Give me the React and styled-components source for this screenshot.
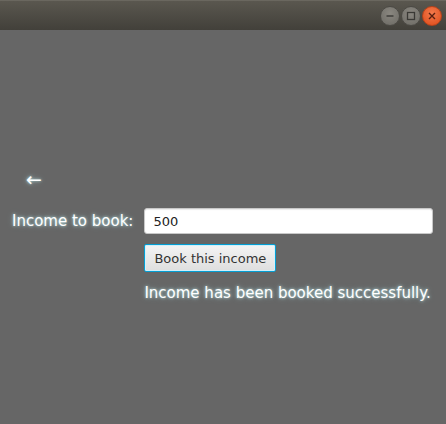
import React from "react";
import styled, { createGlobalStyle } from "styled-components";

const GlobalStyle = createGlobalStyle`
  html, body {
    margin: 0;
    padding: 0;
    background: #666666;
  }
  body {
    font-family: "DejaVu Sans", "Liberation Sans", sans-serif;
  }
`;

const glow = "0 0 3px rgba(200, 255, 255, 0.8), 0 0 6px rgba(180, 240, 255, 0.4)";

export default function App() {
  const [amount, setAmount] = React.useState("500");

  return (
    <Window>
      <GlobalStyle />
      <TitleBar>
        <WinButton>
          <svg width="10" height="10" viewBox="0 0 10 10">
            <line x1="1.5" y1="5" x2="8.5" y2="5" stroke="#3a3935" strokeWidth="1.4" />
          </svg>
        </WinButton>
        <WinButton>
          <svg width="10" height="10" viewBox="0 0 10 10">
            <rect x="1.5" y="1.5" width="7" height="7" fill="none" stroke="#3a3935" strokeWidth="1.3" />
          </svg>
        </WinButton>
        <WinButton close>
          <svg width="10" height="10" viewBox="0 0 10 10">
            <path d="M2 2 L8 8 M8 2 L2 8" stroke="#5a2010" strokeWidth="1.4" />
          </svg>
        </WinButton>
      </TitleBar>

      <Content>
        <BackArrow>←</BackArrow>
        <Form>
          <Label>Income to book:</Label>
          <Input value={amount} onChange={(e) => setAmount(e.target.value)} />
          <span />
          <div>
            <BookButton>Book this income</BookButton>
          </div>
          <span />
          <Message>Income has been booked successfully.</Message>
        </Form>
      </Content>
    </Window>
  );
}

const Window = styled.div`
  width: 446px;
  height: 424px;
  display: flex;
  flex-direction: column;
  background: #666666;
  overflow: hidden;
`;

const TitleBar = styled.div`
  height: 30px;
  flex: none;
  display: flex;
  align-items: center;
  justify-content: flex-end;
  gap: 1px;
  padding-right: 4px;
  box-sizing: border-box;
  background: linear-gradient(#5a574f, #42403a);
  border-top: 1px solid #6a675f;
`;

const WinButton = styled.div`
  width: 18px;
  height: 18px;
  border-radius: 50%;
  display: flex;
  align-items: center;
  justify-content: center;
  background: ${(p) =>
    p.close
      ? "radial-gradient(circle at 50% 35%, #f47a4c, #dd4a18)"
      : "radial-gradient(circle at 50% 35%, #8a8780, #6c6a64)"};
  border: 1px solid ${(p) => (p.close ? "#b8421a" : "#4c4a45")};
`;

const Content = styled.div`
  flex: 1;
  display: flex;
  flex-direction: column;
  padding: 139px 13px 0 12px;
`;

const BackArrow = styled.div`
  font-size: 19px;
  line-height: 20px;
  color: #ffffff;
  margin-left: 14px;
  text-shadow: ${glow};
`;

const Form = styled.div`
  display: grid;
  grid-template-columns: auto 1fr;
  column-gap: 11px;
  row-gap: 10px;
  align-items: center;
  margin-top: 19px;
`;

const Label = styled.div`
  font-size: 15px;
  color: #ffffff;
  text-shadow: ${glow};
`;

const Input = styled.input`
  height: 26px;
  box-sizing: border-box;
  border: 1px solid #c8c8c8;
  border-radius: 3px;
  padding: 0 8px;
  font-family: "DejaVu Sans", sans-serif;
  font-size: 13px;
  color: #222;
  background: #ffffff;
  outline: none;
  box-shadow: inset 0 1px 1px rgba(0, 0, 0, 0.08);
`;

const BookButton = styled.button`
  height: 28px;
  padding: 0 9px;
  box-sizing: border-box;
  border: 1px solid #039ed3;
  border-radius: 2px;
  background: linear-gradient(#f4f4f4, #dedede);
  box-shadow: inset 0 0 0 1px #d0f0fb;
  font-family: "DejaVu Sans", sans-serif;
  font-size: 13px;
  color: #333;
`;

const Message = styled.div`
  font-size: 15px;
  color: #ffffff;
  text-shadow: ${glow};
  margin-top: 2px;
`;
